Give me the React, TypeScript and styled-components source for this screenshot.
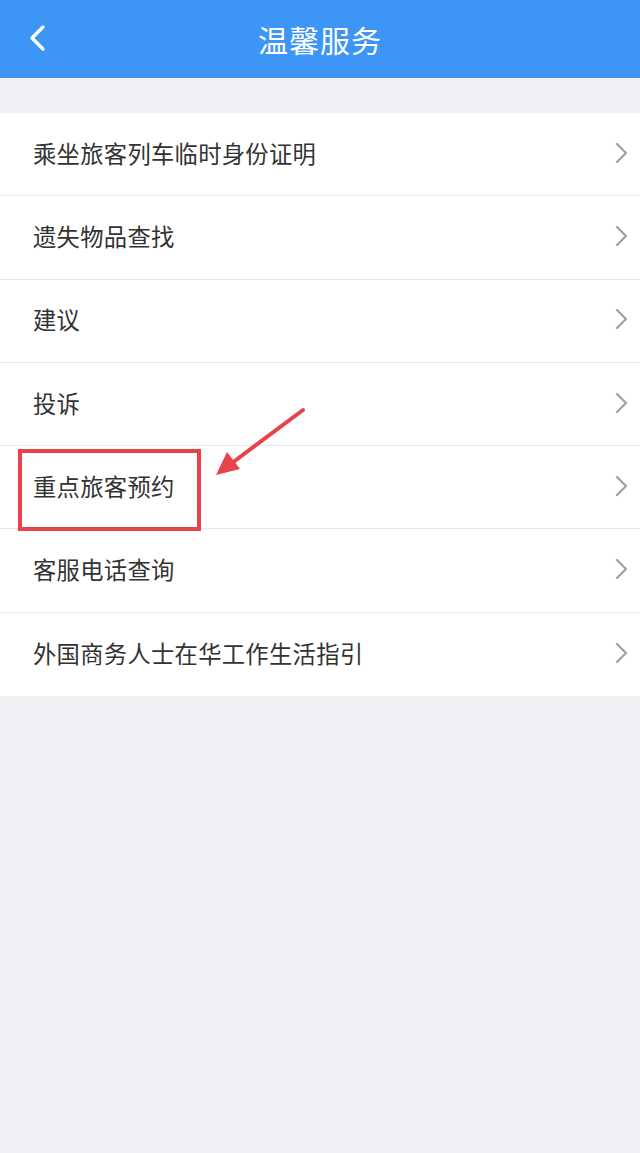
import React from "react";
import styled, { createGlobalStyle } from "styled-components";

const GlobalStyle = createGlobalStyle`
  html, body {
    margin: 0;
    padding: 0;
    background: #efeff4;
    font-family: "Noto Sans CJK SC", "Noto Sans", sans-serif;
  }
`;

const Page = styled.div`
  position: relative;
  width: 640px;
  min-height: 1153px;
  background: #efeff4;
`;

const Header = styled.header`
  height: 78px;
  background: #3d95f5;
  display: grid;
  grid-template-columns: 76px 1fr 76px;
  align-items: center;
`;

const BackButton = styled.div`
  display: flex;
  padding-left: 26px;
  padding-bottom: 2px;
`;

const Title = styled.h1`
  margin: 0;
  color: #fff;
  font-size: 30px;
  font-weight: 400;
  letter-spacing: 1px;
  text-align: center;
`;

const List = styled.div`
  margin-top: 35px;
  background: #fff;
`;

const Row = styled.div<{ $last?: boolean }>`
  position: relative;
  height: 83.3px;
  display: flex;
  align-items: center;
  justify-content: space-between;
  padding: 0 12px 3px 33px;
  border-bottom: ${(p) => (p.$last ? "none" : "1px solid #e6e6e9")};
  box-sizing: border-box;
`;

const Label = styled.span`
  font-size: 23.3px;
  color: #333;
  letter-spacing: 0.3px;
`;

const Highlight = styled.div`
  position: absolute;
  left: 18px;
  top: 3px;
  width: 183px;
  height: 82px;
  border: 4px solid #e8434b;
  box-sizing: border-box;
`;

const Pointer = styled.svg`
  position: absolute;
  left: 210px;
  top: 404px;
`;

const Chevron = () => (
  <svg width="14" height="22" viewBox="0 0 14 22">
    <path d="M3 2 L12 11 L3 20" fill="none" stroke="#a0a0a0" strokeWidth="2.2" strokeLinecap="round" strokeLinejoin="round" />
  </svg>
);

const items = [
  "乘坐旅客列车临时身份证明",
  "遗失物品查找",
  "建议",
  "投诉",
  "重点旅客预约",
  "客服电话查询",
  "外国商务人士在华工作生活指引",
];

export default function App() {
  return (
    <Page>
      <GlobalStyle />
      <Header>
        <BackButton>
          <svg width="24" height="28" viewBox="0 0 24 28">
            <path d="M17 3 L6 14 L17 25" fill="none" stroke="#fff" strokeWidth="3.4" strokeLinecap="round" strokeLinejoin="round" />
          </svg>
        </BackButton>
        <Title>温馨服务</Title>
        <span />
      </Header>
      <List>
        {items.map((t, i) => (
          <Row key={t} $last={i === items.length - 1}>
            <Label>{t}</Label>
            <Chevron />
            {i === 4 && <Highlight />}
          </Row>
        ))}
      </List>
      <Pointer width="100" height="76" viewBox="0 0 100 76">
        <line x1="93" y1="6" x2="18" y2="62" stroke="#e8434b" strokeWidth="4" strokeLinecap="round" />
        <polygon points="6,71 17,48 30,65" fill="#e8434b" />
      </Pointer>
    </Page>
  );
}
